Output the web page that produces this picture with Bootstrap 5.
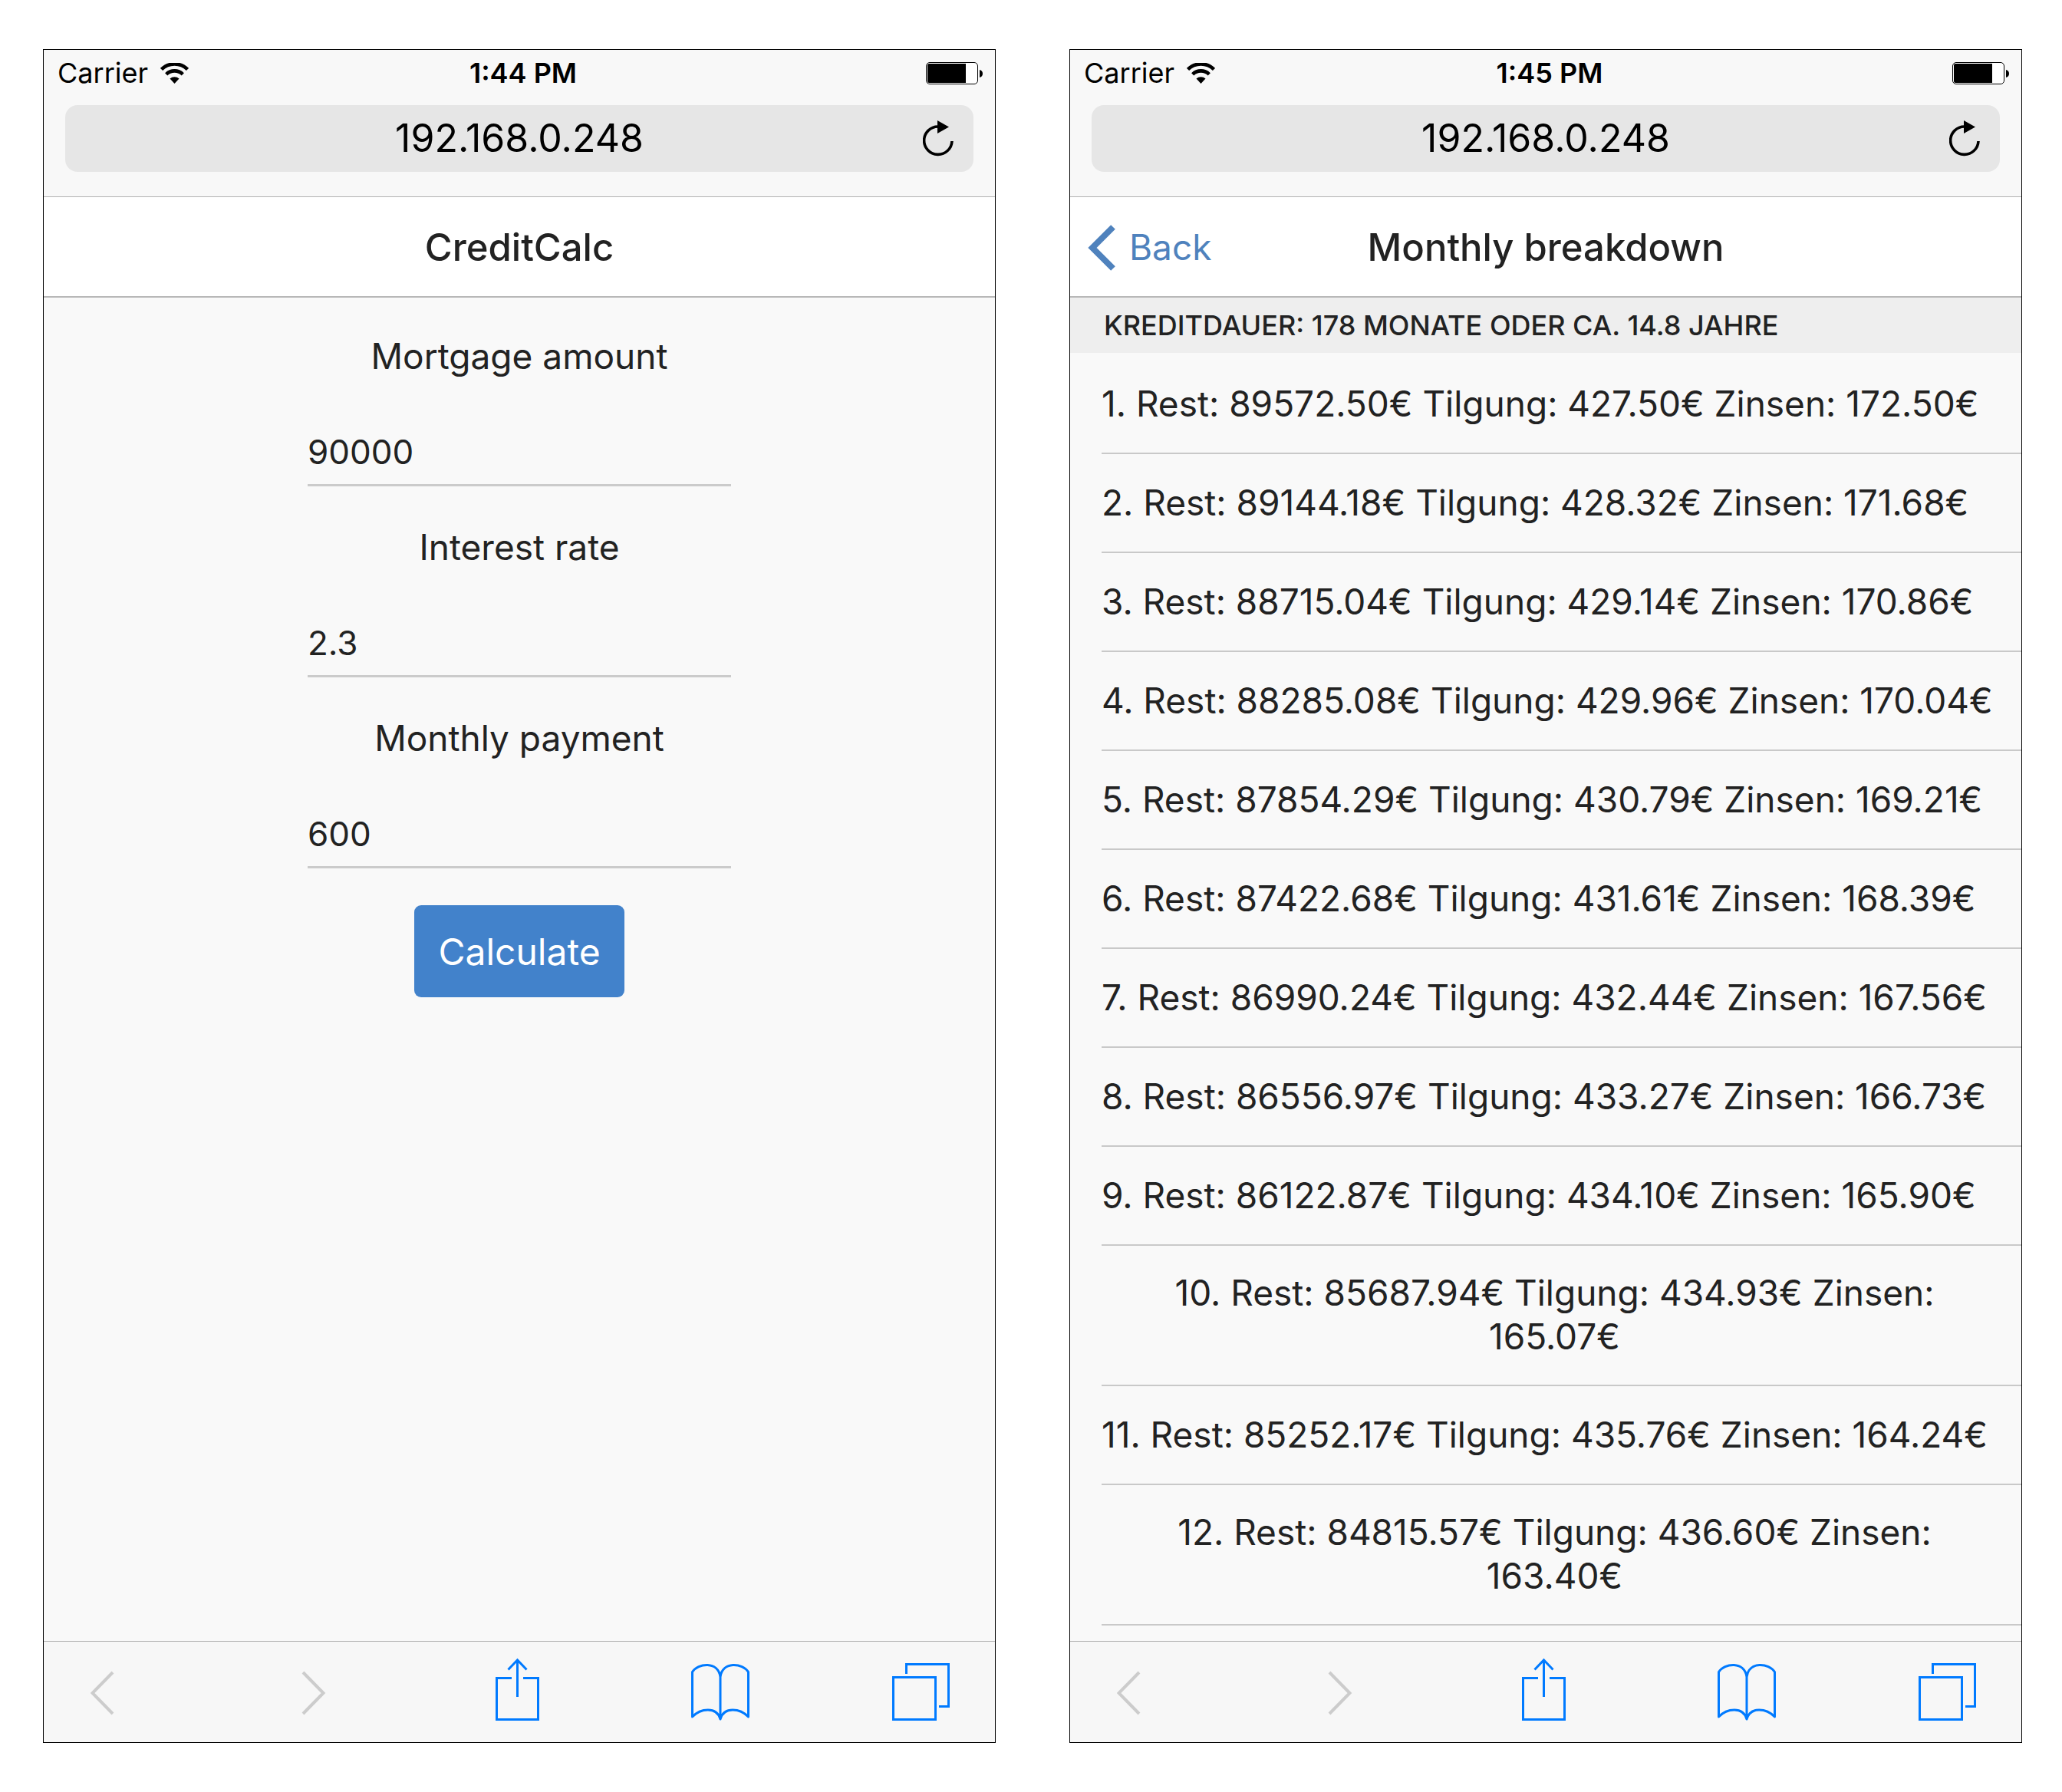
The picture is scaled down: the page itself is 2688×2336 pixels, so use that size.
<!DOCTYPE html>
<html lang="en">
<head>
<meta charset="utf-8">
<meta name="viewport" content="width=device-width, initial-scale=1">
<title>CreditCalc</title>
<link href="https://cdn.jsdelivr.net/npm/bootstrap@5.3.0/dist/css/bootstrap.min.css" rel="stylesheet">
<style>
  body { font-family: Inter, "Liberation Sans", sans-serif; font-size: 46px; line-height: 57px; color: #222; background: #fff; }
  svg { display: block; flex: none; }
  .stage { gap: 96px; padding: 64px 52px 64px 56px; }
  .phone { flex: 1 1 0; min-width: 0; border: 1px solid #000; background: #f9f9f9; }
  .chrome-top { background: #f8f8f8; color: #000; border-bottom: 1px solid #b2b2b2; padding-bottom: 32px; }
  .thirds { display: grid; grid-template-columns: 1fr auto 1fr; align-items: center; }
  .status { font-size: 36px; line-height: 60px; padding: 0 8px 0 18px; margin-bottom: 12px; }
  .address { grid-template-columns: 66px 1fr 66px; height: 87px; margin: 0 28px; border-radius: 16px; background: #e6e6e6; font-size: 50px; }
  .plain-btn { border: 0; padding: 0; background: none; }
  .titlebar { height: 131px; background: #fff; border-bottom: 2px solid #b8b8b8; padding: 2px 23px 0; }
  .titlebar h1 { font-size: 49px; line-height: 57px; font-weight: 500; }
  .back-link { color: #4f82bd; gap: 17px; }
  .calc-form { max-width: 552px; padding-top: 48px; }
  .field + .field { margin-top: 51px; }
  .field-input { border: 0; border-bottom: 3px solid #cbcbcb; border-radius: 0; background: none; color: #222; font-size: 44px; line-height: 57px; height: 74px; margin-top: 67px; padding: 0 0 14px; }
  .calc-btn { width: 274px; height: 120px; margin-top: 48px; padding: 2px 0 0; border: 0; border-radius: 9px; font-size: 48px; --bs-btn-bg: #4282cb; --bs-btn-color: #fff; }
  .list-head { background: #eee; font-size: 36px; line-height: 72px; font-weight: 500; padding-left: 44px; margin-bottom: 3px; }
  .plan { padding-left: 41px; }
  .plan li { min-height: 129px; padding: 33px 18px 34px 0; border-bottom: 2px solid #c9c9c9; }
  .toolbar { height: 132px; background: #f7f7f7; border-top: 1px solid #acacac; padding: 0 59px 0 61px; }
</style>
</head>
<body>
<svg class="d-none" aria-hidden="true">
  <symbol id="wifi" viewBox="0 0 37 27">
    <path d="M1.500 8.500A24 24 0 0 1 35.500 8.500" fill="none" stroke="#000" stroke-width="4.600"/>
    <path d="M7.700 14.800A15.500 15.500 0 0 1 29.300 14.800" fill="none" stroke="#000" stroke-width="4.600"/>
    <path d="M12.500 20.500A9 9 0 0 1 24.500 20.500L18.500 27Z"/>
  </symbol>
  <symbol id="battery" viewBox="0 0 74 29">
    <rect x="0.500" y="0.500" width="67" height="28" rx="4.500" fill="#fff" stroke="#000"/>
    <path d="M4 2H52V27H4Q2 27 2 25V4Q2 2 4 2Z"/>
    <path d="M70 10Q74 11 74 15T70 20Z"/>
  </symbol>
  <symbol id="reload" viewBox="0 0 40 48">
    <path d="M20 8A18.200 18.200 0 1 0 38 27" fill="none" stroke="#000" stroke-width="3.600"/>
    <path d="M19 0L34 8.500L19 17Z"/>
  </symbol>
  <symbol id="prev" viewBox="0 0 76 84">
    <path d="M29 19L2.500 46L29 73" fill="none" stroke="#ccc" stroke-width="4"/>
  </symbol>
  <symbol id="next" viewBox="0 0 76 84">
    <path d="M16 19L42.500 46L16 73" fill="none" stroke="#ccc" stroke-width="4"/>
  </symbol>
  <symbol id="share" viewBox="0 0 76 84">
    <path d="M27 26.500H7.500V80.500H61.500V26.500H42M34.500 51V3M22.500 15.500L34.500 3L46.500 15.500" fill="none" stroke="#007aff" stroke-width="3"/>
  </symbol>
  <symbol id="book" viewBox="0 0 76 84">
    <path d="M38 80V25C35 4 9 7 1.500 18.500V77C12 66 33 63 38 80C43 63 64 66 74.500 77V18.500C67 7 41 4 38 25" fill="none" stroke="#007aff" stroke-width="3" stroke-linejoin="round"/>
  </symbol>
  <symbol id="tabs" viewBox="0 0 76 84">
    <path d="M2.500 25.500H57.500V80.500H2.500ZM19.500 21V8.500H74.500V63.500H62" fill="none" stroke="#007aff" stroke-width="3"/>
  </symbol>
</svg>

<main class="stage d-flex min-vh-100">
  <section class="phone d-flex flex-column" aria-label="Calculator">
    <header class="chrome-top">
      <div class="status thirds">
        <div class="d-flex align-items-center"><span>Carrier</span><svg class="ms-3" width="37" height="27"><use href="#wifi"/></svg></div>
        <span class="fw-semibold">1:44 PM</span>
        <svg class="ms-auto me-2" width="74" height="29"><use href="#battery"/></svg>
      </div>
      <div class="address thirds">
        <span></span><span class="text-center">192.168.0.248</span>
        <button class="plain-btn" type="button" aria-label="Reload"><svg width="40" height="48"><use href="#reload"/></svg></button>
      </div>
    </header>
    <div class="titlebar thirds"><span></span><h1 class="m-0">CreditCalc</h1><span></span></div>
    <form class="calc-form w-100 mx-auto flex-grow-1 text-center">
      <div class="field"><label class="d-block" for="amount">Mortgage amount</label><input class="field-input d-block w-100" id="amount" type="text" value="90000"></div>
      <div class="field"><label class="d-block" for="rate">Interest rate</label><input class="field-input d-block w-100" id="rate" type="text" value="2.3"></div>
      <div class="field"><label class="d-block" for="payment">Monthly payment</label><input class="field-input d-block w-100" id="payment" type="text" value="600"></div>
      <button class="calc-btn btn" type="button">Calculate</button>
    </form>
    <nav class="toolbar d-flex align-items-start justify-content-between" aria-label="Browser">
      <button class="plain-btn" type="button" aria-label="Previous" disabled><svg width="76" height="108" viewBox="0 -21 76 108"><use href="#prev" width="76" height="84"/></svg></button>
      <button class="plain-btn" type="button" aria-label="Next" disabled><svg width="76" height="108" viewBox="0 -21 76 108"><use href="#next" width="76" height="84"/></svg></button>
      <button class="plain-btn" type="button" aria-label="Share"><svg width="76" height="108" viewBox="0 -21 76 108"><use href="#share" width="76" height="84"/></svg></button>
      <button class="plain-btn" type="button" aria-label="Bookmarks"><svg width="76" height="108" viewBox="0 -21 76 108"><use href="#book" width="76" height="84"/></svg></button>
      <button class="plain-btn" type="button" aria-label="Tabs"><svg width="76" height="108" viewBox="0 -21 76 108"><use href="#tabs" width="76" height="84"/></svg></button>
    </nav>
  </section>

  <section class="phone d-flex flex-column" aria-label="Breakdown">
    <header class="chrome-top">
      <div class="status thirds">
        <div class="d-flex align-items-center"><span>Carrier</span><svg class="ms-3" width="37" height="27"><use href="#wifi"/></svg></div>
        <span class="fw-semibold">1:45 PM</span>
        <svg class="ms-auto me-2" width="74" height="29"><use href="#battery"/></svg>
      </div>
      <div class="address thirds">
        <span></span><span class="text-center">192.168.0.248</span>
        <button class="plain-btn" type="button" aria-label="Reload"><svg width="40" height="48"><use href="#reload"/></svg></button>
      </div>
    </header>
    <div class="titlebar thirds">
      <a class="back-link d-flex align-items-center text-decoration-none" href="#"><svg width="37" height="60" viewBox="0 0 37 60" aria-hidden="true"><path d="M33 3L6 30L33 57" fill="none" stroke="#4f82bd" stroke-width="8"/></svg>Back</a>
      <h1 class="m-0">Monthly breakdown</h1><span></span>
    </div>
    <div class="flex-grow-1">
      <h2 class="list-head mt-0 text-uppercase">Kreditdauer: 178 Monate oder ca. 14.8 Jahre</h2>
      <ul class="plan list-unstyled m-0">
        <li class="d-flex align-items-center"><span>1. Rest: 89572.50€ Tilgung: 427.50€ Zinsen: 172.50€</span></li>
        <li class="d-flex align-items-center"><span>2. Rest: 89144.18€ Tilgung: 428.32€ Zinsen: 171.68€</span></li>
        <li class="d-flex align-items-center"><span>3. Rest: 88715.04€ Tilgung: 429.14€ Zinsen: 170.86€</span></li>
        <li class="d-flex align-items-center"><span>4. Rest: 88285.08€ Tilgung: 429.96€ Zinsen: 170.04€</span></li>
        <li class="d-flex align-items-center"><span>5. Rest: 87854.29€ Tilgung: 430.79€ Zinsen: 169.21€</span></li>
        <li class="d-flex align-items-center"><span>6. Rest: 87422.68€ Tilgung: 431.61€ Zinsen: 168.39€</span></li>
        <li class="d-flex align-items-center"><span>7. Rest: 86990.24€ Tilgung: 432.44€ Zinsen: 167.56€</span></li>
        <li class="d-flex align-items-center"><span>8. Rest: 86556.97€ Tilgung: 433.27€ Zinsen: 166.73€</span></li>
        <li class="d-flex align-items-center"><span>9. Rest: 86122.87€ Tilgung: 434.10€ Zinsen: 165.90€</span></li>
        <li class="d-flex align-items-center"><span class="w-100 text-center">10. Rest: 85687.94€ Tilgung: 434.93€ Zinsen:<br>165.07€</span></li>
        <li class="d-flex align-items-center"><span>11. Rest: 85252.17€ Tilgung: 435.76€ Zinsen: 164.24€</span></li>
        <li class="d-flex align-items-center"><span class="w-100 text-center">12. Rest: 84815.57€ Tilgung: 436.60€ Zinsen:<br>163.40€</span></li>
      </ul>
    </div>
    <nav class="toolbar d-flex align-items-start justify-content-between" aria-label="Browser">
      <button class="plain-btn" type="button" aria-label="Previous" disabled><svg width="76" height="108" viewBox="0 -21 76 108"><use href="#prev" width="76" height="84"/></svg></button>
      <button class="plain-btn" type="button" aria-label="Next" disabled><svg width="76" height="108" viewBox="0 -21 76 108"><use href="#next" width="76" height="84"/></svg></button>
      <button class="plain-btn" type="button" aria-label="Share"><svg width="76" height="108" viewBox="0 -21 76 108"><use href="#share" width="76" height="84"/></svg></button>
      <button class="plain-btn" type="button" aria-label="Bookmarks"><svg width="76" height="108" viewBox="0 -21 76 108"><use href="#book" width="76" height="84"/></svg></button>
      <button class="plain-btn" type="button" aria-label="Tabs"><svg width="76" height="108" viewBox="0 -21 76 108"><use href="#tabs" width="76" height="84"/></svg></button>
    </nav>
  </section>
</main>
<script src="https://cdn.jsdelivr.net/npm/bootstrap@5.3.0/dist/js/bootstrap.bundle.min.js"></script>
</body>
</html>
